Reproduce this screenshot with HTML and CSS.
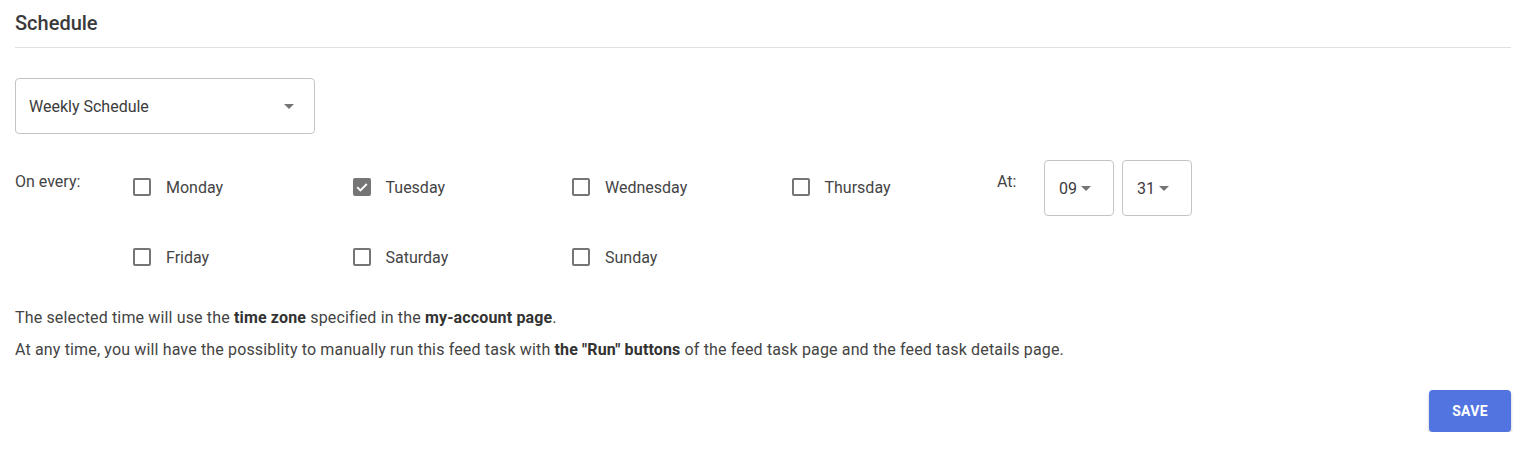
FILE: index.html
```html
<!DOCTYPE html>
<html lang="en">
<head>
<meta charset="UTF-8">
<title>Schedule</title>
<link rel="stylesheet" href="styles.css">
</head>
<body>
<div class="schedule">
    <h2 class="schedule-title">Schedule</h2>

    <div class="select select-type">
        <span>Weekly Schedule</span>
        <span class="caret"></span>
    </div>

    <div class="every">
        <div class="every-label">On every:</div>
        <div class="days">
            <label class="day"><span class="box"></span>Monday</label>
            <label class="day"><span class="box checked"><svg viewBox="0 0 18 18" width="18" height="18"><path d="M4.2 9.2l3.2 3.2 6.4-6.4" fill="none" stroke="#fff" stroke-width="1.8"/></svg></span>Tuesday</label>
            <label class="day"><span class="box"></span>Wednesday</label>
            <label class="day"><span class="box"></span>Thursday</label>
            <label class="day"><span class="box"></span>Friday</label>
            <label class="day"><span class="box"></span>Saturday</label>
            <label class="day"><span class="box"></span>Sunday</label>
        </div>
        <div class="at">
            <div class="every-label">At:</div>
            <div class="select select-time"><span>09</span><span class="caret"></span></div>
            <div class="select select-time"><span>31</span><span class="caret"></span></div>
        </div>
    </div>

    <p class="note">The selected time will use the <b>time zone</b> specified in the <b>my-account page</b>.</p>
    <p class="note">At any time, you will have the possiblity to manually run this feed task with <b>the "Run" buttons</b> of the feed task page and the feed task details page.</p>

    <div class="actions">
        <button class="save">SAVE</button>
    </div>
</div>
</body>
</html>
```

FILE: styles.css
```css
body {
    margin: 0;
    background: #fff;
    font-family: Roboto, "Noto Sans", sans-serif;
    color: #444;
}
.schedule {
    padding: 0 17px 0 15px;
}
.schedule-title {
    margin: 0;
    padding-top: 11px;
    height: 36px;
    font-size: 20px;
    font-weight: 500;
    color: #3a3a3a;
    border-bottom: 1px solid #e0e0e0;
    line-height: 24px;
}
.select {
    box-sizing: border-box;
    border: 1px solid #c4c4c4;
    border-radius: 4px;
    height: 56px;
    display: flex;
    align-items: center;
    justify-content: space-between;
    font-size: 16px;
    color: #3c3c3c;
}
.select-type {
    width: 300px;
    margin-top: 30px;
    padding: 0 20px 0 13px;
}
.caret {
    width: 0;
    height: 0;
    border-left: 5px solid transparent;
    border-right: 5px solid transparent;
    border-top: 5px solid #757575;
}
.every {
    display: flex;
    margin-top: 26px;
}
.every-label {
    font-size: 16px;
    color: #444;
    padding-top: 12px;
}
.every > .every-label {
    width: 118px;
}
.days {
    display: grid;
    grid-template-columns: repeat(4, 219.5px);
    grid-auto-rows: 56px;
    row-gap: 14px;
}
.day {
    display: flex;
    align-items: center;
    font-size: 16px;
    color: #444;
    padding-bottom: 2px;
}
.box {
    box-sizing: border-box;
    width: 18px;
    height: 18px;
    border: 2px solid #757575;
    border-radius: 2px;
    margin-right: 15px;
    display: flex;
}
.box.checked {
    background: #757575;
}
.box svg {
    margin: -2px;
}
.at {
    display: flex;
    gap: 8px;
    margin-left: -14px;
}
.at .every-label {
    width: 39px;
}
.select-time {
    width: 70px;
    padding: 0 22px 0 14px;
}
.note {
    margin: 22px 0 0;
    font-size: 16px;
    line-height: 20px;
    letter-spacing: 0.15px;
    color: #444;
}
.note + .note {
    margin-top: 12px;
}
.note b {
    font-weight: 700;
    color: #333;
}
.actions {
    display: flex;
    justify-content: flex-end;
    margin-top: 30px;
}
.save {
    width: 82px;
    height: 42px;
    border: 0;
    border-radius: 4px;
    background: #5274e0;
    color: #fff;
    font-family: Roboto, sans-serif;
    font-size: 14px;
    font-weight: 700;
    letter-spacing: 0.3px;
    box-shadow: 0 2px 3px rgba(0,0,0,0.25);
}
```
